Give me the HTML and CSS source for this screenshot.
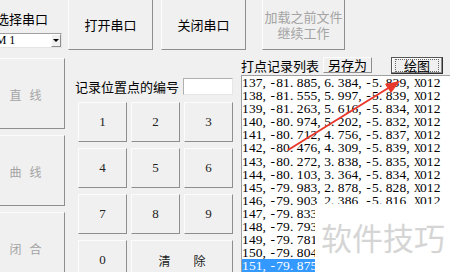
FILE: index.html
```html
<!DOCTYPE html>
<html lang="zh-CN">
<head>
  <meta charset="UTF-8">
  <meta name="viewport" content="width=device-width, initial-scale=1">
  <title>打点记录</title>
  <link rel="stylesheet" href="styles.css">
</head>
<body>

  <div class="app">
    <!-- 串口 -->
    <div class="top">
      <div class="serial">
        <div class="label">选择串口</div>
        <div class="combo">
          <span class="combo-text">COM 1</span>
          <span class="combo-btn"></span>
        </div>
      </div>
      <button class="btn btn-open">打开串口</button>
      <button class="btn btn-close">关闭串口</button>
      <button class="btn btn-load" disabled>加载之前文件<br>继续工作</button>
    </div>

    <div class="main">
      <!-- 线型 -->
      <div class="left">
        <button class="btn shape" disabled><span>直</span><span>线</span></button>
        <button class="btn shape" disabled><span>曲</span><span>线</span></button>
        <button class="btn shape" disabled><span>闭</span><span>合</span></button>
      </div>

      <!-- 编号键盘 -->
      <div class="middle">
        <div class="num-row">
          <span class="label">记录位置点的编号</span>
          <input class="num-input" type="text">
        </div>
        <div class="numpad">
          <button class="btn key">1</button>
          <button class="btn key">2</button>
          <button class="btn key">3</button>
          <button class="btn key">4</button>
          <button class="btn key">5</button>
          <button class="btn key">6</button>
          <button class="btn key">7</button>
          <button class="btn key">8</button>
          <button class="btn key">9</button>
          <button class="btn key">0</button>
          <button class="btn key key-clear"><span>清</span><span>除</span></button>
        </div>
      </div>

      <!-- 记录列表 -->
      <div class="right">
        <div class="list-head">
          <span class="label">打点记录列表</span>
          <button class="btn btn-save">另存为</button>
          <button class="btn btn-draw"><span class="focus">绘图</span></button>
        </div>
        <div id="record-list" class="listbox">
          <div class="cover"><span class="watermark">软件技巧</span></div>
        </div>
      </div>
    </div>
  </div>

  <svg class="annotation" width="450" height="272" viewBox="0 0 450 272">
    <line x1="288" y1="150" x2="390" y2="87" stroke="#e8382c" stroke-width="2"/>
    <polygon points="400,81 391,93 385,84" fill="#e8382c"/>
  </svg>

  <script src="script.js"></script>
</body>
</html>
```

FILE: styles.css
```css
/* RESET */
* { box-sizing: border-box; margin: 0; padding: 0; }
html, body { width: 450px; height: 272px; overflow: hidden; }
body {
  position: relative;
  background: #f0f0f0; color: #000;
  font-family: "Noto Sans CJK SC", sans-serif; font-size: 13px;
}

.app { display: flex; flex-direction: column; width: 466px; margin: -1px 0 0 -14px; }
.label { white-space: nowrap; }

/* BOTONES */
.btn {
  font: inherit; color: #000; background: #f0f0f0;
  border: 1px solid; border-color: #fcfcfc #8e8e8e #8e8e8e #fcfcfc;
  flex: none; cursor: pointer;
}
.btn:disabled { color: #a4a4a4; cursor: default; }

/* TOP */
.top { display: flex; align-items: flex-start; height: 51px; }
.serial { width: 76px; flex: none; }
.serial .label { margin: 13px 0 0 10px; line-height: 13px; }
.combo {
  display: flex; align-items: center;
  margin-top: 8px; height: 15px; width: 76px;
  background: #fff; border: 1px solid; border-color: #a0a0a0 #e4e4e4 #e4e4e4 #a0a0a0;
}
.combo-text { margin-left: -8px; font-family: "Liberation Serif", serif; font-size: 12px; line-height: 13px; }
.combo-btn {
  display: flex; align-items: center; justify-content: center;
  margin-left: auto; width: 10px; height: 13px;
  background: #f0f0f0; border: 1px solid; border-color: #fff #8e8e8e #8e8e8e #fff;
}
.combo-btn::after {
  content: ""; width: 0; height: 0;
  border-left: 3px solid transparent; border-right: 3px solid transparent;
  border-top: 3px solid #000;
}
.btn-open { margin-left: 6px; width: 85px; height: 51px; }
.btn-close { margin-left: 8px; width: 85px; height: 51px; }
.btn-load { margin-left: 16px; width: 83px; height: 51px; line-height: 16px; }

/* MAIN */
.main { display: flex; }

.left { width: 79px; flex: none; display: flex; flex-direction: column; gap: 6px; padding-top: 8px; }
.shape {
  height: 71px; display: flex; justify-content: center; align-items: center;
  gap: 8px; font-size: 12px; padding-top: 2px;
}

.middle { width: 159px; flex: none; margin-left: 10px; padding-top: 28px; }
.num-row { display: flex; align-items: center; height: 17px; }
.num-row .label { width: 108px; line-height: 17px; }
.num-input {
  width: 50px; height: 17px; background: #fff; outline: none;
  border: 1px solid; border-color: #b0b0b0 #e6e6e6 #e6e6e6 #b0b0b0;
}
.numpad {
  display: grid;
  grid-template-columns: repeat(3, 49px);
  grid-auto-rows: 40px;
  gap: 6px 4px;
  margin: 7px 0 0 3px;
}
.key { font-family: "Liberation Serif", serif; font-size: 13px; color: #222; }
.key-clear {
  grid-column: span 2;
  display: flex; justify-content: center; align-items: center; gap: 23px;
  font-family: "Noto Sans CJK SC", sans-serif; font-size: 12px;
}

.right { flex: 1; min-width: 0; margin-left: 7px; padding-top: 7px; }
.list-head { display: flex; align-items: flex-start; height: 17px; }
.list-head .label { width: 82px; line-height: 17px; }
.btn-save { width: 49px; height: 16px; line-height: 14px; }
.btn-draw {
  margin-left: 19px; width: 52px; height: 17px;
  display: flex; align-items: center; justify-content: center;
  border-color: #555 #333 #333 #555;
  box-shadow: inset -1px -1px 0 #8e8e8e, inset 1px 1px 0 #fff;
}
.btn-draw .focus { border: 1px dotted #666; padding: 0 8px; line-height: 11px; }

/* LISTA */
.listbox {
  position: relative; overflow: hidden;
  margin-top: 1px; height: 200px;
  background: #fff;
  border-top: 1px solid #a0a0a0; border-left: 1px solid #a0a0a0;
  font-family: "Liberation Serif", serif; font-size: 13.5px;
}
.row { height: 13.1px; line-height: 13.1px; white-space: nowrap; }
.row.selected { background: #3399ff; color: #fff; width: 73px; }
.ch { display: inline-block; width: 6.85px; text-align: center; }
.ch.punct { text-align: left; }
.ch.wide { transform: scaleX(0.72); }

.cover {
  position: absolute; left: 73px; top: 128px; right: 0; bottom: 0;
  background: #fff; padding: 17px 0 0 6px;
}
.watermark {
  font-family: "Noto Sans CJK SC", sans-serif; font-size: 31px; line-height: 31px;
  color: #d5d5d5; white-space: nowrap;
}

/* FLECHA */
.annotation { position: absolute; top: 0; left: 0; pointer-events: none; }
```

FILE: script.js
```js
// registros del listado (los ultimos quedan tapados por la marca de agua)
var records = [
  '137,-81.885,6.384,-5.839,X012',
  '138,-81.555,5.997,-5.839,X012',
  '139,-81.263,5.616,-5.834,X012',
  '140,-80.974,5.202,-5.832,X012',
  '141,-80.712,4.756,-5.837,X012',
  '142,-80.476,4.309,-5.839,X012',
  '143,-80.272,3.838,-5.835,X012',
  '144,-80.103,3.364,-5.834,X012',
  '145,-79.983,2.878,-5.828,X012',
  '146,-79.903,2.386,-5.816,X012',
  '147,-79.833',
  '148,-79.793',
  '149,-79.781',
  '150,-79.804',
  '151,-79.875'
];

var list = document.getElementById('record-list');
var cover = list.querySelector('.cover');

records.forEach(function (rec, i) {
  var row = document.createElement('div');
  row.className = 'row';
  if (i === records.length - 1) row.classList.add('selected');
  for (var k = 0; k < rec.length; k++) {
    var ch = rec[k];
    var c = document.createElement('span');
    c.className = 'ch';
    if (ch === ',' || ch === '.') c.className += ' punct';
    if (ch === 'X') c.className += ' wide';
    c.textContent = ch;
    row.appendChild(c);
  }
  list.insertBefore(row, cover);
});
```
